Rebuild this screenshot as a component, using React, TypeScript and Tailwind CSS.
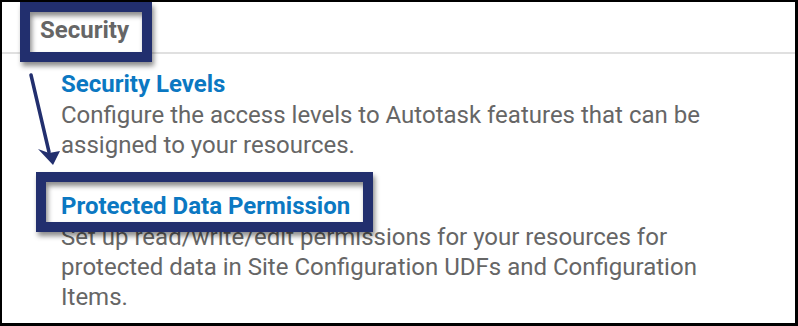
import React from 'react';

const items = [
  {
    title: 'Security Levels',
    text: 'Configure the access levels to Autotask features that can be assigned to your resources.',
  },
  {
    title: 'Protected Data Permission',
    text: 'Set up read/write/edit permissions for your resources for protected data in Site Configuration UDFs and Configuration Items.',
  },
];

export default function App() {
  return (
    <div
      className="relative w-[798px] h-[326px] overflow-hidden bg-white border-black border-t-2 border-l-2 border-r-[3px] border-b-[3px]"
      style={{ fontFamily: 'Roboto, "Liberation Sans", sans-serif' }}
    >
      {/* section header */}
      <div className="h-[52px] pt-[14px] pl-[38px] border-b-2 border-[#e0e0e0]">
        <h2 className="text-[24px] leading-[28px] font-bold text-[#666666]">Security</h2>
      </div>

      {/* links */}
      <div className="pl-[59px] pt-[15px] flex flex-col gap-[31px]">
        {items.map((item) => (
          <div key={item.title} className="w-[665px]">
            <a className="block text-[24px] leading-[31px] font-bold text-[#0b78c2]">{item.title}</a>
            <p className="text-[24px] leading-[30px] text-[#666666]">{item.text}</p>
          </div>
        ))}
      </div>

      {/* annotation boxes */}
      <div className="absolute left-[18px] top-0 w-[132px] h-[60px] border-[10px] border-[#222f6e] shadow-[2px_4px_5px_rgba(0,0,0,0.45),inset_2px_4px_5px_rgba(0,0,0,0.45)]" />
      <div className="absolute left-[34px] top-[170px] w-[337px] h-[60px] border-[10px] border-[#222f6e] shadow-[2px_4px_5px_rgba(0,0,0,0.45),inset_2px_4px_5px_rgba(0,0,0,0.45)]" />

      {/* arrow */}
      <svg className="absolute left-0 top-0" width="796" height="321" viewBox="0 0 796 321">
        <line x1="29" y1="73" x2="47" y2="150" stroke="#222f6e" strokeWidth="3.5" strokeLinecap="round" />
        <polygon points="51,163 36,147 47,151 58,149" fill="#222f6e" />
      </svg>
    </div>
  );
}
